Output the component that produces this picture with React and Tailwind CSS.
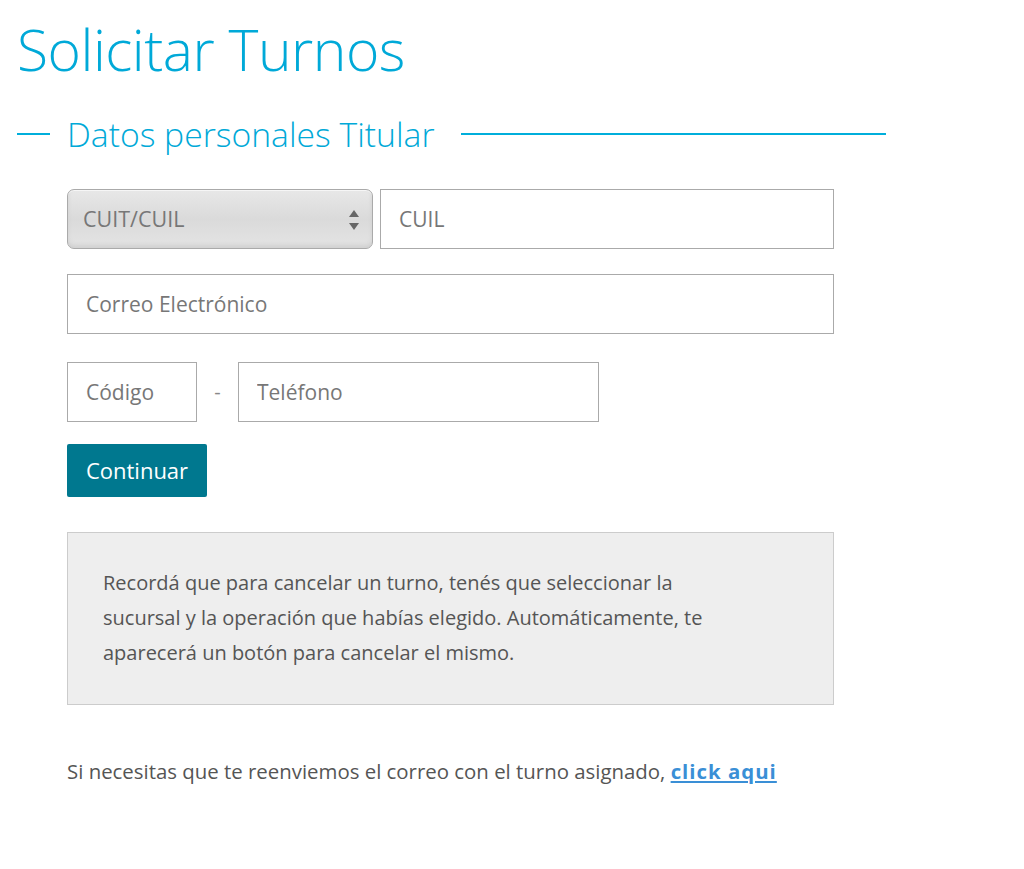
export default function App() {
  return (
    <div
      className="min-h-[869px] bg-white px-[17px] pt-[14px] text-[#555]"
      style={{ fontFamily: '"Open Sans", "Noto Sans", sans-serif' }}
    >
      <h1 className="text-[57px] font-light leading-[70px] tracking-[-0.5px] text-[#00a9d8]">
        Solicitar Turnos
      </h1>

      <div className="mt-[30px] flex w-[869px] items-center">
        <div className="h-[2px] w-[33px] bg-[#00aedb]" />
        <h2 className="ml-[17px] mr-[26px] text-[33.7px] font-light leading-[40px] text-[#00a9d8]">
          Datos personales Titular
        </h2>
        <div className="h-[2px] flex-1 bg-[#00aedb]" />
      </div>

      <form className="ml-[50px] mt-[35px] w-[767px]">
        <div className="flex gap-[7px]">
          <div className="relative h-[60px] w-[306px] rounded-[7px] border border-[#aaa] bg-gradient-to-b from-[#e8e8e8] via-[#dadada] to-[#e4e4e4] shadow-[inset_0_1px_0_#f6f6f6,inset_0_-3px_4px_#d0d0d0]">
            <span className="absolute left-[15px] top-[14px] text-[21.5px] leading-[30px] text-[#777]">
              CUIT/CUIL
            </span>
            <svg
              className="absolute right-[12px] top-[19px]"
              width="12"
              height="22"
              viewBox="0 0 12 22"
            >
              <path d="M6 1 L11 8 L1 8 Z" fill="#666" />
              <path d="M6 21 L11 14 L1 14 Z" fill="#666" />
            </svg>
          </div>
          <input
            className="h-[60px] w-[454px] border border-[#aaa] px-[18px] text-[21px] text-[#555] placeholder:text-[#777] outline-none"
            placeholder="CUIL"
          />
        </div>

        <input
          className="mt-[25px] block h-[60px] w-[767px] border border-[#aaa] px-[18px] text-[21px] text-[#555] placeholder:text-[#777] outline-none"
          placeholder="Correo Electrónico"
        />

        <div className="mt-[28px] flex items-center">
          <input
            className="h-[60px] w-[130px] border border-[#aaa] px-[18px] text-[21px] text-[#555] placeholder:text-[#777] outline-none"
            placeholder="Código"
          />
          <span className="w-[41px] text-center text-[20px] text-[#888]">-</span>
          <input
            className="h-[60px] w-[361px] border border-[#aaa] px-[18px] text-[21px] text-[#555] placeholder:text-[#777] outline-none"
            placeholder="Teléfono"
          />
        </div>

        <button
          type="button"
          className="mt-[22px] block h-[53px] w-[140px] rounded-[2px] bg-[#00788f] text-[22px] text-white"
        >
          Continuar
        </button>

        <div className="mt-[35px] h-[173px] border border-[#ccc] bg-[#eeeeee] px-[35px] pt-[32px]">
          <p className="text-[20px] leading-[35px] text-[#555]">
            Recordá que para cancelar un turno, tenés que seleccionar la
            <br />
            sucursal y la operación que habías elegido. Automáticamente, te
            <br />
            aparecerá un botón para cancelar el mismo.
          </p>
        </div>

        <p className="mt-[52px] text-[20.4px] leading-[28px] text-[#555]">
          Si necesitas que te reenviemos el correo con el turno asignado,{" "}
          <a
            href="#"
            className="font-bold tracking-[1px] text-[#3a8fd6] underline"
          >
            click aqui
          </a>
        </p>
      </form>
    </div>
  );
}
